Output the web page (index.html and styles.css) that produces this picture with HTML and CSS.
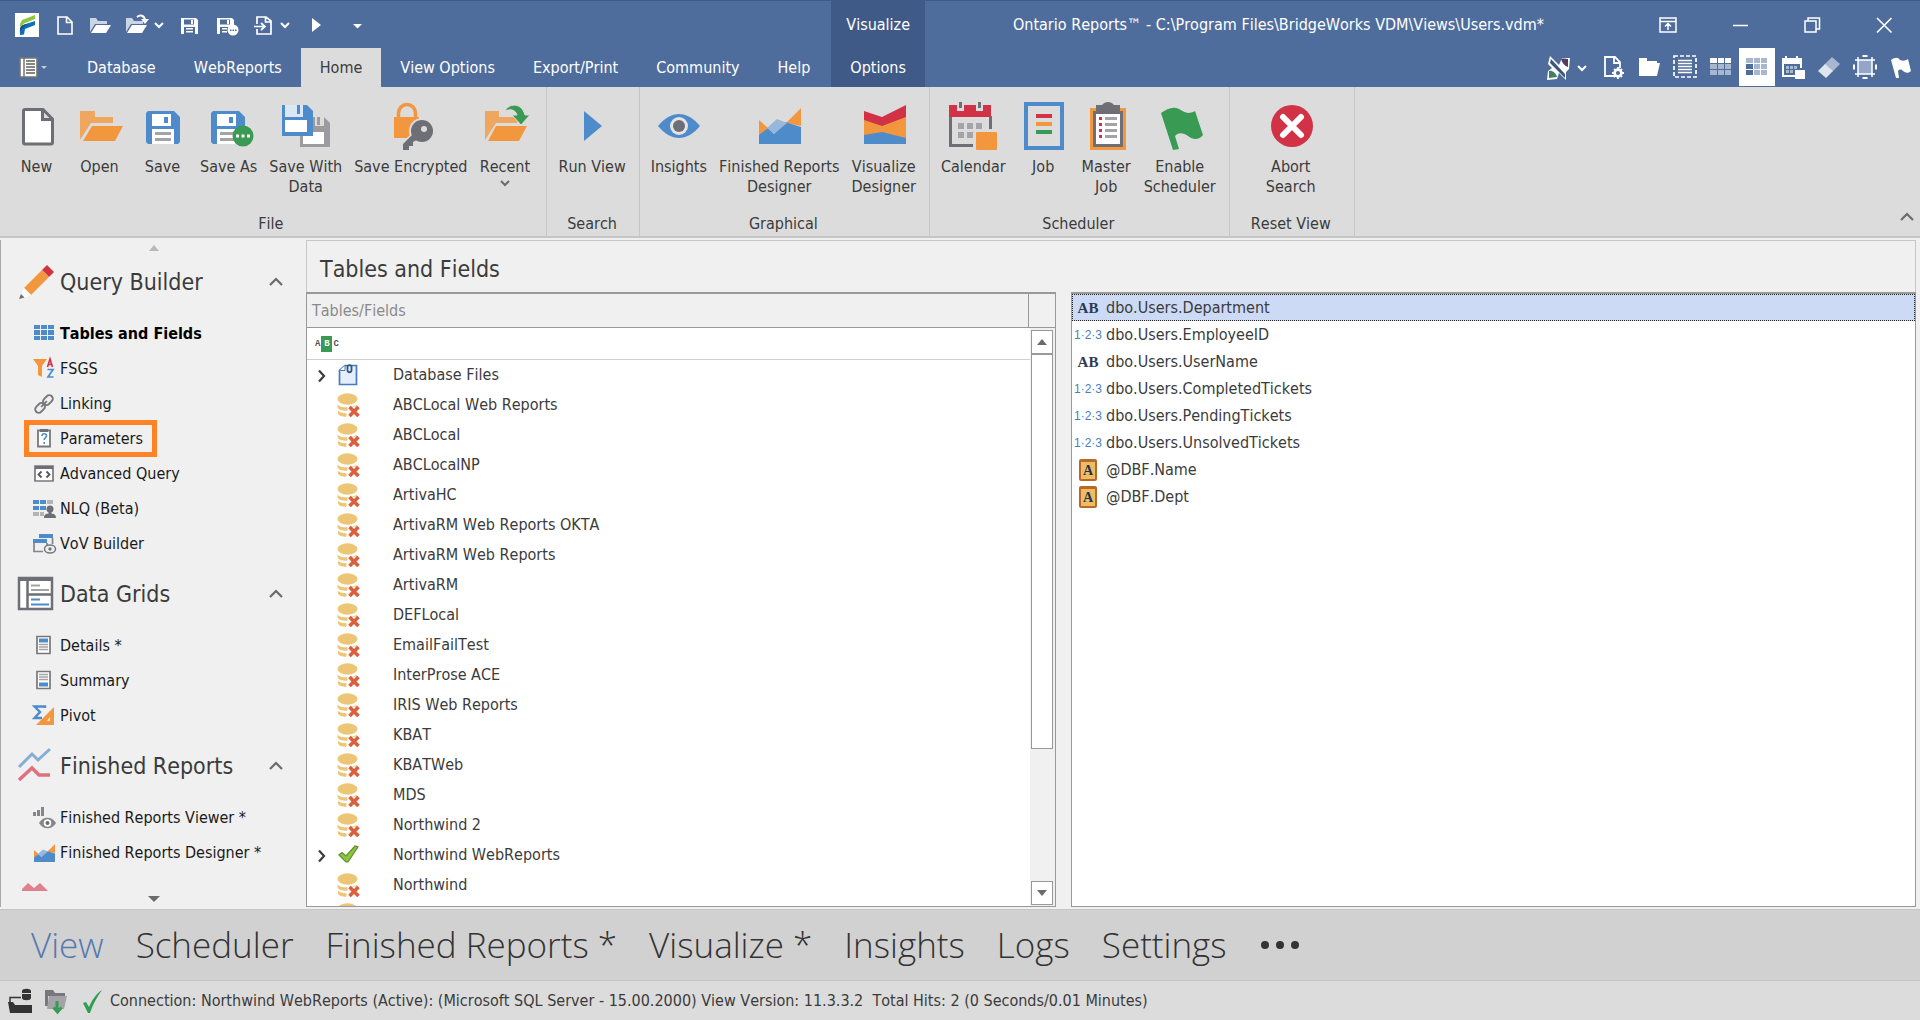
FILE: index.html
```html
<!DOCTYPE html>
<html lang="en">
<head>
<meta charset="utf-8">
<title>Ontario Reports</title>
<link rel="stylesheet" href="styles.css">
</head>
<body>
<svg class="defs" aria-hidden="true">
  <symbol id="chev-down" viewBox="0 0 12 12"><path d="M2 4l4 4 4-4" fill="none" stroke="currentColor" stroke-width="2"/></symbol>
  <symbol id="chev-up" viewBox="0 0 14 14"><path d="M1 10l6-6 6 6" fill="none" stroke="currentColor" stroke-width="2.2"/></symbol>
  <symbol id="chev-right" viewBox="0 0 14 14"><path d="M4 1.500l5 5.500-5 5.500" fill="none" stroke="currentColor" stroke-width="2.200"/></symbol>
  <symbol id="db" viewBox="0 0 24 24">
    <ellipse cx="10.500" cy="6" rx="10" ry="5.800" fill="#edc577"/>
    <path d="M.5 11.500c2 2.600 6 3 10 2.800v3.400C6 17.800 1 17 .5 14zM1 18c2 1.800 5 2.200 8.500 2.200v3.600C5 23.800 1.500 22.500 1 20.500zM13 13.800c3-.5 5-1 7-2v2h-7z" fill="#edc577"/>
    <path d="M12.500 14l9 9m0-9l-9 9" stroke="#d9603f" stroke-width="3.600"/>
  </symbol>
  <symbol id="area" viewBox="0 0 48 48">
    <path d="M4 18l9 8-9 8zM31 21L46 6v18z" fill="#f3973f"/>
    <path d="M4 33l9-7 6 6 11-12 16 5v17H4z" fill="#4e8bcb"/>
    <path d="M12 26l10-9 10 4-13 11z" fill="#98b7da"/>
  </symbol>
</svg>

<header class="top">
  <div class="top-left">
    <div class="quick">
      <svg class="i24" viewBox="0 0 24 24"><path d="M0 0h24v24H0z" fill="#fff"/><path d="M5 11l2-4L20 2v4L9 10.500 5 14z" fill="#8dc63f"/><path d="M5 20c-.500-4 0-7 3-8l12-4v4l-10 4-1 5.500-4 .500z" fill="#0d6fb8"/><path d="M5 15l3-3 5-1.500-4 3.500-4 4z" fill="#1b4f86"/></svg>
      <button class="ic" aria-label="New"><svg class="i24" viewBox="0 0 24 24"><path d="M7 4h9l5 5v12H7zM15.500 4v5.500H21" fill="none" stroke="#fff" stroke-width="1.600"/></svg></button>
      <button class="ic" aria-label="Open"><svg class="i24" viewBox="0 0 24 24"><path d="M3 19V5h6l2 3h9v3H8z" fill="#cbd4e4"/><path d="M9 12h15l-5 8H4z" fill="#fff"/></svg></button>
      <span class="split"><button class="ic" aria-label="Open recent"><svg class="i24" viewBox="0 0 24 24"><path d="M3 19V5h6l2 3h9v3H8z" fill="#cbd4e4"/><path d="M9 12h15l-5 8H4z" fill="#fff"/><path d="M14 4c4-3 8-1 8 4" fill="none" stroke="#fff" stroke-width="2"/><path d="M18 6h8l-4 5z" fill="#fff"/></svg></button><button class="ic" aria-label="Recent files"><svg class="i12"><use href="#chev-down"/></svg></button></span>
      <button class="ic" aria-label="Save"><svg class="i24" viewBox="0 0 24 24"><path d="M4 5h15l2 2v14H4z" fill="#fff"/><path d="M7 6.500h10v5H7zM7 14h11v7H7z" fill="#4f6d9c"/><path d="M14 7h2v4h-2zM9 15h7v1.500H9zm0 3h7v1.500H9z" fill="#fff"/></svg></button>
      <button class="ic" aria-label="Save As"><svg class="i24" viewBox="0 0 24 24"><path d="M4 5h15l2 2v14H4z" fill="#fff"/><path d="M7 6.500h10v5H7zM7 14h11v7H7z" fill="#4f6d9c"/><path d="M14 7h2v4h-2zM9 15h5v1.500H9zm0 3h5v1.500H9z" fill="#fff"/><circle cx="20" cy="17" r="5.500" fill="#fff"/><path d="M17 16.500h1.500V18H17zm2.500 0H21V18h-1.500zm2.500 0h1.500V18H22z" fill="#4f6d9c"/></svg></button>
      <span class="split"><button class="ic" aria-label="Export"><svg class="i24" viewBox="0 0 24 24"><path d="M8 11V4h9l5 4v13H8v-5M16.500 4v5H22M5 13.500h10M12 10l4 3.500-4 3.500" fill="none" stroke="#fff" stroke-width="1.700"/></svg></button><button class="ic" aria-label="Export options"><svg class="i12"><use href="#chev-down"/></svg></button></span>
      <button class="ic" aria-label="Run"><svg class="i24" viewBox="0 0 24 24"><path d="M9 5l9 7-9 7z" fill="#fff"/></svg></button>
      <button class="ic" aria-label="Customize toolbar"><svg class="i24" viewBox="0 0 24 24"><path d="M14 11h9l-4.500 4.500z" fill="#fff"/></svg></button>
    </div>
    <nav class="tabs">
      <button class="app-menu" aria-label="Application menu"><svg width="28" height="22" viewBox="0 0 28 22"><path d="M1 1h17v19H1z" fill="#fff" stroke="#77756f" stroke-width="1.600"/><path d="M5 1v19" stroke="#77756f" stroke-width="1.500"/><path d="M7 4h9M7 7h9M7 10h9M7 13h9M7 16h9" stroke="#5f5f5f" stroke-width="1.300"/><path d="M22 9h6l-3 3z" fill="#c9cbd0"/></svg></button>
      <button class="tab">Database</button>
      <button class="tab">WebReports</button>
      <button class="tab tab-on">Home</button>
      <button class="tab">View Options</button>
      <button class="tab">Export/Print</button>
      <button class="tab">Community</button>
      <button class="tab">Help</button>
    </nav>
  </div>
  <div class="context"><div class="context-title">Visualize</div><button class="tab">Options</button></div>
  <div class="top-right">
    <div class="title-row">
      <h1 class="title">Ontario Reports™ - C:\Program Files\BridgeWorks VDM\Views\Users.vdm*</h1>
      <button class="win" aria-label="Ribbon display"><svg class="i24" viewBox="0 0 24 24"><path d="M4 5h16v14H4zM4 8.500h16M12 17v-6M9 13.500l3-3 3 3" fill="none" stroke="#fff" stroke-width="1.500"/></svg></button>
      <button class="win" aria-label="Minimize"><svg class="i24" viewBox="0 0 24 24"><path d="M5 12.500h15" stroke="#fff" stroke-width="1.500"/></svg></button>
      <button class="win" aria-label="Restore"><svg class="i24" viewBox="0 0 24 24"><path d="M5 8h11v11H5zM8 8V5h11.500v11H16" fill="none" stroke="#fff" stroke-width="1.500"/></svg></button>
      <button class="win" aria-label="Close"><svg class="i24" viewBox="0 0 24 24"><path d="M5 5l14.500 14.500M19.500 5L5 19.500" stroke="#fff" stroke-width="1.600"/></svg></button>
    </div>
    <div class="tool-row">
      <span class="split"><button class="ic" aria-label="Skin"><svg class="i24" viewBox="0 0 24 24"><path d="M4 0l9 9 3-7h8l-1 11-3 3v8l-7-7-2 6-10 1 1-9 4-3-4-4z" fill="#fff"/><path d="M5 3l14 15v4L4 7z" fill="#3e567c"/><path d="M3 15c3-1 7 2 8 6l-8 1z" fill="#3f8060"/><path d="M15 3c3-1 5 0 7 0v8c-3-1-6-4-7-8z" fill="#5a3a63"/></svg></button><button class="ic" aria-label="Skin options"><svg class="i12"><use href="#chev-down"/></svg></button></span>
      <button class="tool" aria-label="Page settings"><svg class="i24" viewBox="0 0 24 24"><path d="M13 21H4V2h10l5 5v6M13 2v6h6" fill="none" stroke="#fff" stroke-width="1.800"/><circle cx="17" cy="18" r="3.400" fill="none" stroke="#fff" stroke-width="2.600"/><path d="M17 12v3M17 21v3M11 18h3M20 18h3M13 14l2 2M19 20l2 2M21 14l-2 2M15 20l-2 2" stroke="#fff" stroke-width="1.800"/></svg></button>
      <button class="tool" aria-label="Folder"><svg class="i24" viewBox="0 0 24 24"><path d="M2 3h8v3h10v2h3l-3 13H2z" fill="#fff"/></svg></button>
      <button class="tool" aria-label="Select rows"><svg class="i24" viewBox="0 0 24 24"><rect x="1" y="1" width="22" height="21" fill="none" stroke="#fff" stroke-width="1.700" stroke-dasharray="4 2"/><path d="M5 5.500h14M5 8.500h14M5 11.500h14M5 14.500h14M5 17.500h14" stroke="#fff" stroke-width="1.500"/></svg></button>
      <button class="tool" aria-label="Header grid"><svg class="i24" viewBox="0 0 24 24"><path d="M1 3h7v5H1zm8 0h6v5H9zm7 0h6v5h-6z" fill="#fff"/><path d="M1 9h7v5H1zm8 0h6v5H9zm7 0h6v5h-6zM1 15h7v5H1zm8 0h6v5H9zm7 0h6v5h-6z" fill="#a8b7d0"/></svg></button>
      <button class="tool tool-on" aria-label="Row grid"><svg class="i24" viewBox="0 0 24 24"><path d="M1 9h7v5H1zm0 6h7v5H1z" fill="#4f6d9c"/><path d="M1 3h7v5H1zm8 0h6v5H9zm7 0h6v5h-6zM9 9h6v5H9zm7 0h6v5h-6zM9 15h6v5H9zm7 0h6v5h-6z" fill="#a8b7d0"/></svg></button>
      <button class="tool" aria-label="Calendar"><svg class="i24" viewBox="0 0 24 24"><path d="M1 3h3V1h2v2h9V1h2v2h4v6H1z" fill="#fff"/><path d="M2 5v16h12M20 6v7" fill="none" stroke="#fff" stroke-width="2"/><path d="M5 11h3v3H5zm4 0h3v3H9zm4 0h3v3h-3zM5 15h3v3H5zm4 0h3v3H9z" fill="#a8b7d0"/><path d="M14 15h10v9H14z" fill="#fff"/></svg></button>
      <button class="tool" aria-label="Erase"><svg class="i24" viewBox="0 0 24 24"><path d="M15 2l8 7-8 8-8-7z" fill="#a8b7d0"/><path d="M8 9l8 7-7 7-8-7z" fill="#dfe4ee"/></svg></button>
      <button class="tool" aria-label="Fit"><svg class="i24" viewBox="0 0 24 24"><path d="M5 5h14v14H5z" fill="#93a6c8"/><path d="M5 2v20M19 2v20M2 5h20M2 19h20" stroke="#fff" stroke-width="1.500"/><path d="M9.500 1h5M9.500 23h5M1 9.500v5M23 9.500v5" stroke="#fff" stroke-width="2"/></svg></button>
      <button class="tool" aria-label="Flag"><svg class="i24" viewBox="0 0 24 24"><path d="M2 5c4-3 7-3 9 0 3 1 5 1 8-1l3 12c-3 3-6 2-9-1-2-1-3 0-4 1l1 7H7z" fill="#fff"/></svg></button>
    </div>
  </div>
</header>

<section class="ribbon">
  <div class="group group-file">
    <div class="cmds">
      <button class="cmd"><svg class="i48" viewBox="0 0 48 48"><path d="M12 7.500h18l9.500 9.500v23.500a1.500 1.500 0 0 1-1.500 1.500H12a1.500 1.500 0 0 1-1.500-1.500V9A1.500 1.500 0 0 1 12 7.500zM29.500 8v9.500H39" fill="#fff" stroke="#6d6e76" stroke-width="3"/></svg>New</button>
      <button class="cmd"><svg class="i48" viewBox="0 0 48 48"><path d="M4 38V9h15v6h18v6H15z" fill="#efa760"/><path d="M16 24h31l-8 15H7z" fill="#f3973f"/></svg>Open</button>
      <button class="cmd"><svg class="i48" viewBox="0 0 48 48"><path d="M9 9h26l6 6v25l-2 2H9l-2-2V11z" fill="#4e8bcb"/><path d="M13 12h19v12H13zM13 27h22v15H13z" fill="#fff"/><path d="M25 15h4v6h-4z" fill="#4e8bcb"/><path d="M16 30h16v3H16zm0 6h16v3H16z" fill="#a4a4a8"/></svg>Save</button>
      <button class="cmd"><svg class="i48" viewBox="0 0 48 48"><path d="M8 9h26l6 6v25l-2 2H8l-2-2V11z" fill="#4e8bcb"/><path d="M12 12h19v12H12zM12 27h22v15H12z" fill="#fff"/><path d="M24 15h4v6h-4z" fill="#4e8bcb"/><path d="M15 30h16v3H15zm0 6h16v3H15z" fill="#a4a4a8"/><circle cx="38" cy="34" r="10.500" fill="#399a54"/><path d="M31 32.500h3v3h-3zm5.500 0h3v3h-3zm5.500 0h3v3h-3z" fill="#fff"/></svg>Save As</button>
      <button class="cmd"><svg class="i48" viewBox="0 0 48 48"><path d="M30 15h12l6 6v24H18V33h12z" fill="#9b9ba0"/><path d="M33 15h9v9h-9z" fill="#dcdcdc"/><path d="M35 15h3v8h-3z" fill="#9b9ba0"/><path d="M21 30h21v12H21z" fill="#fff"/><path d="M0 3h25l6 6v25H0z" fill="#4e8bcb"/><path d="M3 3h18v12H3z" fill="#dbe7f4"/><path d="M15 3h3v9h-3z" fill="#4e8bcb"/><path d="M3 18h22v12H3z" fill="#fff"/></svg>Save With<br>Data</button>
      <button class="cmd"><svg class="i48" viewBox="0 0 48 48"><path d="M11.500 16v-5a8.500 8.500 0 0 1 17 0v5" fill="none" stroke="#f3973f" stroke-width="3.500"/><path d="M7 15h25v21H7z" fill="#f3973f"/><path d="M33 30L19 44" stroke="#dcdcdc" stroke-width="10"/><circle cx="35" cy="29" r="13" fill="#dcdcdc"/><circle cx="35" cy="29" r="11" fill="#6d6e76"/><path d="M29 29L16 42v6h6v-4h4v-4l9-5z" fill="#6d6e76"/><circle cx="37" cy="27" r="3" fill="#dcdcdc"/></svg>Save Encrypted</button>
      <button class="cmd"><svg class="i48" viewBox="0 0 48 48"><path d="M4 38V9h14v6h18v6H15z" fill="#efa760"/><path d="M15 24h31l-8 15H7z" fill="#f3973f"/><path d="M24 9c3-7 16-10 20 4h5l-9 10-9-10h5c-2-6-7-6-12-4z" fill="#399a54" stroke="#dcdcdc"/></svg>Recent<svg class="i12 more"><use href="#chev-down"/></svg></button>
    </div>
    <div class="group-name">File</div>
  </div>
  <div class="group">
    <div class="cmds">
      <button class="cmd"><svg class="i48" viewBox="0 0 48 48"><path d="M16 9l18 15-18 15z" fill="#4e8bcb"/></svg>Run View</button>
    </div>
    <div class="group-name">Search</div>
  </div>
  <div class="group">
    <div class="cmds">
      <button class="cmd"><svg class="i48" viewBox="0 0 48 48"><path d="M3 24c13-16 29-16 42 0-13 16-29 16-42 0z" fill="#4e8bcb"/><circle cx="24" cy="24" r="9" fill="#e4e4e4"/><circle cx="24" cy="24" r="6" fill="#6d6e76"/></svg>Insights</button>
      <button class="cmd"><svg class="i48"><use href="#area"/></svg>Finished Reports<br>Designer</button>
      <button class="cmd"><svg class="i48" viewBox="0 0 48 48"><path d="M4 9l18 6 24-12v13L22 25 4 19z" fill="#d13245"/><path d="M4 18l18 6 24-9v22l-24-6-18 3z" fill="#f3973f"/><path d="M4 33l18-3 24 6v6H4z" fill="#4e8bcb"/></svg>Visualize<br>Designer</button>
    </div>
    <div class="group-name">Graphical</div>
  </div>
  <div class="group">
    <div class="cmds">
      <button class="cmd"><svg class="i48" viewBox="0 0 48 48"><path d="M1.500 14v29.500H24M41.500 14v13" fill="none" stroke="#6d6e76" stroke-width="3"/><path d="M0 3h42v12H0z" fill="#d13245"/><path d="M8 0h7v9H8zm19 0h7v9h-7z" fill="#dcdcdc"/><path d="M10 0h3v6h-3zm19 0h3v6h-3z" fill="#6d6e76"/><path d="M9 21h6v6H9zm9 0h6v6h-6zm9 0h6v6h-6zM9 30h6v6H9zm9 0h6v6h-6z" fill="#a4a4a8"/><rect x="27" y="30" width="21" height="18" rx="1" fill="#f3973f"/></svg>Calendar</button>
      <button class="cmd"><svg class="i48" viewBox="0 0 48 48"><rect x="7" y="2" width="36" height="44" fill="none" stroke="#4e8bcb" stroke-width="4"/><path d="M17 14h16" stroke="#d13245" stroke-width="4"/><path d="M17 22h16" stroke="#f3973f" stroke-width="4"/><path d="M17 30h16" stroke="#399a54" stroke-width="4"/></svg>Job</button>
      <button class="cmd"><svg class="i48" viewBox="0 0 48 48"><path d="M8 6h36v42H8z" fill="#f3973f"/><path d="M11 9h30v36H11z" fill="#6d6e76"/><path d="M14 12h24v30H14z" fill="#fff"/><path d="M14 3h6c3-4 9-4 12 0h6v9H14z" fill="#6d6e76"/><path d="M17 15h3v3h-3zm0 6h3v3h-3zm0 6h3v3h-3zm0 6h3v3h-3z" fill="#d13245"/><path d="M23 15h12v3H23zm0 6h12v3H23zm0 6h12v3H23zm0 6h12v3H23z" fill="#a4a4a8"/></svg>Master<br>Job</button>
      <button class="cmd"><svg class="i48" viewBox="0 0 48 48"><path d="M5 11c6-4 12-7 18-4s8 6 16 2l8 24c-4 5-10 5-15 1-5-3-9-4-13 0l4 13-6 1z" fill="#399a54"/></svg>Enable<br>Scheduler</button>
    </div>
    <div class="group-name">Scheduler</div>
  </div>
  <div class="group group-reset">
    <div class="cmds">
      <button class="cmd"><svg class="i48" viewBox="0 0 48 48"><circle cx="25" cy="24" r="21" fill="#d13245"/><path d="M16 15l18 18M34 15L16 33" stroke="#fff" stroke-width="6" stroke-linecap="round"/></svg>Abort<br>Search</button>
    </div>
    <div class="group-name">Reset View</div>
  </div>
  <button class="collapse" aria-label="Collapse ribbon"><svg class="i14"><use href="#chev-up"/></svg></button>
</section>

<main class="work">
  <aside class="side">
    <button class="scroll-hint hint-up" aria-label="Scroll up"><svg width="10" height="6" viewBox="0 0 10 6"><path d="M0 6l5-6 5 6z" fill="currentColor"/></svg></button>
    <div class="side-body">
      <section class="sec">
        <button class="sec-head"><svg class="i40" viewBox="0 0 40 40"><path d="M26 8l5-5 7 7-5 5z" fill="#d13245"/><path d="M26 8l7 7-18 18-7-7z" fill="#f3973f"/><path d="M8 26l7 7-12 4z" fill="#fff"/><path d="M5 32l3.500 3.500L3 37z" fill="#6d6e76"/></svg><span>Query Builder</span><svg class="i14"><use href="#chev-up"/></svg></button>
        <ul class="items">
          <li><button class="item item-on"><svg class="i24" viewBox="0 0 24 24"><path d="M2 3h6v4H2zm7 0h6v4H9zm7 0h6v4h-6zM2 8h6v5H2zm7 0h6v5H9zm7 0h6v5h-6zM2 14h6v4H2zm7 0h6v4H9zm7 0h6v4h-6z" fill="#4e8bcb"/></svg>Tables and Fields</button></li>
          <li><button class="item"><svg class="i24" viewBox="0 0 24 24"><path d="M1 2h14l-5 7v11l-4-2V9z" fill="#f3973f"/><path d="M15.500 10L18 2l2.500 8M16.500 7.500h3" fill="none" stroke="#d13245" stroke-width="1.600"/><path d="M15.500 12.500H21l-5 7.500h5.500" fill="none" stroke="#4e8bcb" stroke-width="1.700"/></svg>FSGS</button></li>
          <li><button class="item"><svg class="i24" viewBox="0 0 24 24"><g fill="none" stroke="#77777d" stroke-width="1.900" transform="rotate(-45 12 12)"><rect x="1" y="8.500" width="11" height="7" rx="3.500"/><rect x="12" y="8.500" width="11" height="7" rx="3.500"/><path d="M8 12h8"/></g></svg>Linking</button></li>
          <li class="marked"><button class="item"><svg class="i24" viewBox="0 0 24 24"><path d="M6 3.500h12v16H6z" fill="#fff" stroke="#77777d" stroke-width="1.800"/><path d="M8 2h8v3H8z" fill="#6d6e76"/><path d="M10 9c0-3 4.500-3 4.500 0 0 1.500-2.300 2-2.300 4M12.200 15v2" fill="none" stroke="#4e8bcb" stroke-width="1.600"/></svg>Parameters</button></li>
          <li><button class="item"><svg class="i24" viewBox="0 0 24 24"><path d="M3 4h18v15H3z" fill="#fff" stroke="#77777d" stroke-width="1.700"/><path d="M3 4h18v3H3z" fill="#6d6e76"/><path d="M9.500 9.500l-3 3 3 3M14.500 9.500l3 3-3 3" fill="none" stroke="#55565c" stroke-width="1.800"/></svg>Advanced Query</button></li>
          <li><button class="item"><svg class="i24" viewBox="0 0 24 24"><path d="M1 3h6v4H1zm7 0h6v4H8zM1 9h6v4H1zm7 0h6v4H8z" fill="#4e8bcb"/><path d="M15 3h6v4h-6zM1 15h6v4H1zm7 0h4v4H8z" fill="#b4b4b7"/><circle cx="18" cy="12" r="3.500" fill="#6d6e76"/><path d="M12 21c0-4 3-4.500 6-4.500s6 .5 6 4.500zM16.500 14h3v4h-3z" fill="#6d6e76"/></svg>NLQ (Beta)</button></li>
          <li><button class="item"><svg class="i24" viewBox="0 0 24 24"><path d="M7 2h14v4H7zM1 7h14v4H1z" fill="#4e8bcb"/><path d="M20.500 6v6M2 11v8.500h9M15 11v2" fill="none" stroke="#85858a" stroke-width="1.700"/><ellipse cx="18" cy="17" rx="5.500" ry="4" fill="none" stroke="#77777d" stroke-width="1.500"/><circle cx="18" cy="17" r="1.700" fill="#77777d"/></svg>VoV Builder</button></li>
        </ul>
      </section>
      <section class="sec">
        <button class="sec-head"><svg class="i40" viewBox="0 0 40 40"><path d="M3 4h33v31H3z" fill="#fff" stroke="#6d6e76" stroke-width="2.500"/><path d="M2 3h35v4H2z" fill="#6d6e76"/><path d="M11.500 4v31M11 20.500h26" stroke="#6d6e76" stroke-width="2.500"/><path d="M15 11.500h9M15 16h18" stroke="#a4a4a8" stroke-width="2"/><path d="M15 25.500h9M15 30.500h18" stroke="#4e8bcb" stroke-width="2"/></svg><span>Data Grids</span><svg class="i14"><use href="#chev-up"/></svg></button>
        <ul class="items">
          <li><button class="item"><svg class="i24" viewBox="0 0 24 24"><path d="M5 2.500h13v17H5z" fill="#fff" stroke="#77777d" stroke-width="1.700"/><path d="M7 4.500h9v4H7z" fill="#4e8bcb"/><path d="M7 10.500h9M7 13h9M7 15.500h9" stroke="#a4a4a8" stroke-width="1.500"/></svg>Details *</button></li>
          <li><button class="item"><svg class="i24" viewBox="0 0 24 24"><path d="M5 2.500h13v17H5z" fill="#fff" stroke="#77777d" stroke-width="1.700"/><path d="M7 13.500h9v4H7z" fill="#4e8bcb"/><path d="M7 5.500h9M7 8h9M7 10.500h9" stroke="#a4a4a8" stroke-width="1.500"/></svg>Summary</button></li>
          <li><button class="item"><svg class="i24" viewBox="0 0 24 24"><path d="M13 4V2.500H2.500L8 8l-5.500 6H10" fill="none" stroke="#4e8bcb" stroke-width="2.400"/><path d="M22 3v18H4zM18 13l-3 4h3z" fill="#f3973f" fill-rule="evenodd"/></svg>Pivot</button></li>
        </ul>
      </section>
      <section class="sec">
        <button class="sec-head"><svg class="i40" viewBox="0 0 40 40"><path d="M3 21L16 8l6 6L34 3" fill="none" stroke="#86add6" stroke-width="3"/><path d="M3 34l13-12 7 7h11" fill="none" stroke="#e0707e" stroke-width="3.500"/></svg><span>Finished Reports</span><svg class="i14"><use href="#chev-up"/></svg></button>
        <ul class="items">
          <li><button class="item"><svg class="i24" viewBox="0 0 24 24"><path d="M1 6h3v4H1zm4-2h3v6H5zm4-3h3v9H9z" fill="#85858a"/><path d="M7 17c4-7 13-7 17 0-4 7-13 7-17 0z" fill="#85858a"/><circle cx="15.500" cy="17" r="3.800" fill="#fff"/><circle cx="15.500" cy="17" r="2" fill="#6d6e76"/></svg>Finished Reports Viewer *</button></li>
          <li><button class="item"><svg class="i24"><use href="#area"/></svg>Finished Reports Designer *</button></li>
        </ul>
      </section>
      <section class="sec">
        <button class="sec-head" aria-label="Visualize"><svg class="i40" viewBox="0 0 40 40"><path d="M6 6l6-6 6 5 6-5 9 9v24H6z" fill="#e0808c"/></svg></button>
      </section>
    </div>
    <button class="scroll-hint" aria-label="Scroll down"><svg width="12" height="6" viewBox="0 0 12 6"><path d="M0 0h12L6 6z" fill="currentColor"/></svg></button>
  </aside>

  <section class="content">
    <h2 class="content-title">Tables and Fields</h2>
    <div class="panes">
      <div class="tree">
        <div class="tree-head"><span>Tables/Fields</span></div>
        <div class="tree-main">
          <div class="tree-list">
            <label class="filter"><span class="abc">A<b>B</b>C</span><input type="text" aria-label="Filter tables and fields"></label>
            <ul class="nodes">
              <li><svg class="i14 exp"><use href="#chev-right"/></svg><svg class="i24" viewBox="0 0 24 24"><path d="M2.500 7.500L8 2.500h11.500v19h-17z" fill="#e4effb" stroke="#4a7ab8" stroke-width="1.700"/><path d="M2.500 7.500H8v-5" fill="#fff" stroke="#4a7ab8"/><path d="M15 4c-2-3-5-2-4.500 1v2c0 3 4 3 4 0V4" fill="none" stroke="#2f5a7e" stroke-width="1.800"/></svg>Database Files</li>
              <li><svg class="i24"><use href="#db"/></svg>ABCLocal Web Reports</li>
              <li><svg class="i24"><use href="#db"/></svg>ABCLocal</li>
              <li><svg class="i24"><use href="#db"/></svg>ABCLocalNP</li>
              <li><svg class="i24"><use href="#db"/></svg>ArtivaHC</li>
              <li><svg class="i24"><use href="#db"/></svg>ArtivaRM Web Reports OKTA</li>
              <li><svg class="i24"><use href="#db"/></svg>ArtivaRM Web Reports</li>
              <li><svg class="i24"><use href="#db"/></svg>ArtivaRM</li>
              <li><svg class="i24"><use href="#db"/></svg>DEFLocal</li>
              <li><svg class="i24"><use href="#db"/></svg>EmailFailTest</li>
              <li><svg class="i24"><use href="#db"/></svg>InterProse ACE</li>
              <li><svg class="i24"><use href="#db"/></svg>IRIS Web Reports</li>
              <li><svg class="i24"><use href="#db"/></svg>KBAT</li>
              <li><svg class="i24"><use href="#db"/></svg>KBATWeb</li>
              <li><svg class="i24"><use href="#db"/></svg>MDS</li>
              <li><svg class="i24"><use href="#db"/></svg>Northwind 2</li>
              <li><svg class="i14 exp"><use href="#chev-right"/></svg><svg class="i24" viewBox="0 0 24 24"><path d="M2 12l3-2.500 4 3.500L18 3l3 .8L11 19H9z" fill="#8cc63f" stroke="#5e8f2c" stroke-width="1.200"/></svg>Northwind WebReports</li>
              <li><svg class="i24"><use href="#db"/></svg>Northwind</li>
              <li><svg class="i24"><use href="#db"/></svg></li>
            </ul>
          </div>
          <div class="bar">
            <button class="bar-btn" aria-label="Scroll list up"><svg width="10" height="6" viewBox="0 0 10 6"><path d="M0 6l5-6 5 6z" fill="currentColor"/></svg></button>
            <div class="track"><div class="thumb"></div></div>
            <button class="bar-btn" aria-label="Scroll list down"><svg width="10" height="6" viewBox="0 0 10 6"><path d="M0 0h10L5 6z" fill="currentColor"/></svg></button>
          </div>
        </div>
      </div>
      <ul class="fields">
        <li class="picked"><span class="kind kind-ab">AB</span>dbo.Users.Department</li>
        <li><span class="kind kind-num">1·2·3</span>dbo.Users.EmployeeID</li>
        <li><span class="kind kind-ab">AB</span>dbo.Users.UserName</li>
        <li><span class="kind kind-num">1·2·3</span>dbo.Users.CompletedTickets</li>
        <li><span class="kind kind-num">1·2·3</span>dbo.Users.PendingTickets</li>
        <li><span class="kind kind-num">1·2·3</span>dbo.Users.UnsolvedTickets</li>
        <li><span class="kind"><b class="book">A</b></span>@DBF.Name</li>
        <li><span class="kind"><b class="book">A</b></span>@DBF.Dept</li>
      </ul>
    </div>
  </section>
</main>

<nav class="modes">
  <button class="mode mode-on">View</button>
  <button class="mode">Scheduler</button>
  <button class="mode">Finished Reports *</button>
  <button class="mode">Visualize *</button>
  <button class="mode">Insights</button>
  <button class="mode">Logs</button>
  <button class="mode">Settings</button>
  <button class="mode" aria-label="More"><svg width="42" height="10" viewBox="0 0 42 10"><g fill="#333"><circle cx="6" cy="5" r="4"/><circle cx="21" cy="5" r="4"/><circle cx="36" cy="5" r="4"/></g></svg></button>
</nav>

<footer class="status">
  <svg class="i24" viewBox="0 0 24 24"><path d="M14 2c0-3 9-3 9 0v7c0 3-9 3-9 0zM0 13h5l2 3h17v8H2z" fill="#333"/><path d="M2 13V8.500h11" fill="none" stroke="#333" stroke-width="1.500"/><path d="M14 4.500h9" stroke="#dcdcdc"/></svg>
  <svg class="i24" viewBox="0 0 24 24"><path d="M0 1h8l2 3h10v3H3v10H0z" fill="#77777d"/><path d="M4 7h18l-3 13H2z" fill="#a4a4a8"/><path d="M12 12v11M8.500 18.500l4 4.500 4-4.500" fill="none" stroke="#399a54" stroke-width="3"/></svg>
  <p><svg class="i24" viewBox="0 0 24 24"><path d="M1 14l3-1 3 5C10 11 14 5 20 1 15 8 11 15 8 24H6z" fill="#2f9e50"/></svg>Connection: Northwind WebReports (Active): (Microsoft SQL Server - 15.00.2000) View Version: 11.3.3.2&nbsp; Total Hits: 2 (0 Seconds/0.01 Minutes)</p>
</footer>
</body>
</html>
```
FILE: styles.css
```css
*, *::after { box-sizing: border-box; }

body {
  margin: 0;
  height: 100vh;
  display: flex;
  flex-direction: column;
  overflow: hidden;
  background: #f0f0f0;
  color: #3b3b3b;
  font: 16px/20px "DejaVu Sans Condensed", "DejaVu Sans", "Liberation Sans", sans-serif;
  font-kerning: none;
}

button {
  margin: 0;
  padding: 0;
  border: 0;
  background: none;
  color: inherit;
  font: inherit;
  font-kerning: none;
}

ul { margin: 0; padding: 0; list-style: none; }
svg { flex: none; display: block; overflow: visible; }
.defs { position: absolute; width: 0; height: 0; }
.i12 { width: 12px; height: 12px; }
.i14 { width: 14px; height: 14px; }
.i24 { width: 24px; height: 24px; }
.i40 { width: 40px; height: 40px; }
.i48 { width: 48px; height: 48px; }

/* Title bar and tabs */
.top {
  display: flex;
  flex: none;
  background: #4f6d9c;
  border-top: 1px solid #3f5a87;
  color: #fff;
}
.quick { display: flex; align-items: center; gap: 12px; height: 47px; padding-left: 15px; }
.split { display: flex; align-items: center; gap: 6px; }
.tabs { display: flex; height: 39px; padding-right: 2px; }
.tab { height: 39px; padding: 0 19px; white-space: nowrap; }
.tab-on { background: #dcdcdc; color: #3b3b3b; }
.app-menu { width: 68px; padding-left: 19px; }
.context { background: #3f5a87; text-align: center; }
.context-title { height: 47px; line-height: 47px; }
.top-right { flex: 1; min-width: 0; }
.title-row { display: flex; align-items: center; height: 47px; }
.title { flex: 1; margin: 0; font-size: 16px; font-weight: normal; text-align: center; white-space: nowrap; }
.win { display: flex; justify-content: center; width: 72px; }
.tool-row { display: flex; justify-content: flex-end; height: 39px; padding-right: 1px; }
.tool-row .split { padding-right: 7px; }
.tool { display: flex; align-items: center; justify-content: center; width: 36px; height: 38px; }
.tool-on { background: #fff; }

/* Ribbon */
.ribbon {
  display: flex;
  flex: none;
  height: 151px;
  background: #dcdcdc;
  border-bottom: 2px solid #c6c6c6;
}
.group {
  display: flex;
  flex-direction: column;
  justify-content: space-between;
  padding: 15px 7px 2px 5px;
  border-right: 1px solid #c6c6c6;
}
.group-file { padding-right: 10px; }
.group-reset { width: 125px; }
.cmds { display: flex; justify-content: center; }
.cmd {
  display: flex;
  flex-direction: column;
  align-items: center;
  min-width: 63px;
  padding: 0 6px;
  white-space: nowrap;
}
.cmd .i48 { margin-bottom: 7px; }
.more { color: #6b6b6b; }
.group-name { text-align: center; }
.collapse { margin: auto 6px 12px auto; color: #6b6b6b; }

/* Work area */
.work { display: flex; flex: 1; min-height: 0; padding: 2px 4px 2px 0; }
.side {
  display: flex;
  flex-direction: column;
  flex: none;
  width: 306px;
  border-left: 1px solid #a8a8a8;
}
.scroll-hint { display: flex; align-items: center; justify-content: center; height: 16px; color: #6b6b6b; }
.hint-up { color: #b9b9b9; }
.side-body { flex: 1; min-height: 0; overflow: hidden; }
.sec { margin-bottom: 7px; }
.sec-head {
  display: flex;
  align-items: center;
  width: 100%;
  height: 52px;
  padding: 0 23px 0 15px;
  gap: 4px;
  font-size: 23px;
  line-height: 28px;
  text-align: left;
}
.sec-head span { flex: 1; white-space: nowrap; }
.sec-head .i14 { color: #6b6b6b; }
.items { padding-top: 8px; color: #1a1a1a; }
.item {
  display: flex;
  align-items: center;
  gap: 4px;
  height: 35px;
  padding-left: 31px;
  white-space: nowrap;
}
.item-on { color: #000; font-weight: bold; }
.marked { position: relative; }
.marked::after {
  content: "";
  position: absolute;
  inset: -1px auto -1px 23px;
  width: 133px;
  border: 5px solid #ff8227;
}

.content { display: flex; flex-direction: column; flex: 1; min-width: 0; }
.content-title {
  flex: none;
  height: 52px;
  margin: 0;
  padding-left: 13px;
  border: 1px solid #c6c6c6;
  border-bottom: 0;
  font-size: 23px;
  font-weight: normal;
  line-height: 56px;
}
.panes { display: flex; flex: 1; min-height: 0; gap: 15px; }
.tree {
  display: flex;
  flex-direction: column;
  width: 750px;
  border: 1px solid #999;
  border-top-width: 2px;
  background: #fff;
}
.tree-head {
  display: flex;
  flex: none;
  height: 34px;
  padding-right: 26px;
  background: #f0f0f0;
  border-bottom: 1px solid #999;
  color: #8a8a8a;
  line-height: 34px;
}
.tree-head span { flex: 1; padding-left: 5px; border-right: 1px solid #999; }
.tree-main { display: flex; flex: 1; min-height: 0; }
.tree-list { display: flex; flex-direction: column; flex: 1; min-width: 0; overflow: hidden; }
.filter {
  display: flex;
  align-items: center;
  flex: none;
  height: 32px;
  padding-left: 8px;
  border-bottom: 1px solid #d0d0d0;
}
.filter input { flex: 1; border: 0; background: none; font: inherit; }
.abc { display: flex; align-items: center; gap: 1px; color: #555; font: bold 9px/16px "Liberation Mono", monospace; }
.abc b { width: 11px; background: #399a54; color: #fff; text-align: center; }
.nodes li {
  display: flex;
  align-items: center;
  gap: 32px;
  position: relative;
  height: 30px;
  padding-left: 30px;
  white-space: nowrap;
}
.exp { position: absolute; left: 8px; top: 9px; }
.bar { display: flex; flex-direction: column; width: 25px; padding: 2px 2px 1px 1px; background: #f0f0f0; }
.bar-btn {
  display: flex;
  align-items: center;
  justify-content: center;
  height: 24px;
  background: #fff;
  border: 1px solid #999;
  color: #6b6b6b;
}
.track { flex: 1; }
.thumb { height: 75%; background: #fff; border: 1px solid #999; }

.fields { flex: 1; min-width: 0; border: 1px solid #999; border-top-width: 2px; background: #fff; }
.fields li { display: flex; align-items: center; gap: 5px; height: 27px; padding-left: 3px; white-space: nowrap; }
.fields .picked { background: #cddaf5; outline: 1px dotted #222; outline-offset: -1px; }
.kind { display: flex; flex: none; justify-content: center; width: 26px; }
.kind-ab { color: #2c3a57; font: bold 15px/20px "Liberation Serif", serif; }
.kind-num { color: #4a80bd; font: 12px/20px "Liberation Sans", sans-serif; }
.book {
  width: 18px;
  height: 22px;
  background: #eebd62;
  border: 2px solid #b9682c;
  border-top-width: 3px;
  border-radius: 2px;
  color: #26324d;
  font: bold 14px/18px "Liberation Serif", serif;
  text-align: center;
}

/* Mode switcher and status line */
.modes {
  display: flex;
  align-items: center;
  flex: none;
  gap: 32px;
  height: 71px;
  padding-left: 31px;
  background: #d1d1d1;
  border-top: 1px solid #c6c6c6;
}
.mode { font: 300 35px/48px "Open Sans", "Noto Sans", sans-serif; font-kerning: none; color: #333; white-space: nowrap; }
.mode-on { color: #5479b0; }
.status {
  display: flex;
  align-items: center;
  flex: none;
  gap: 13px;
  height: 40px;
  padding-left: 8px;
  background: #dcdcdc;
  border-top: 1px solid #c6c6c6;
}
.status p { display: flex; align-items: center; gap: 4px; margin: 0; padding-right: 8px; white-space: nowrap; }
```
